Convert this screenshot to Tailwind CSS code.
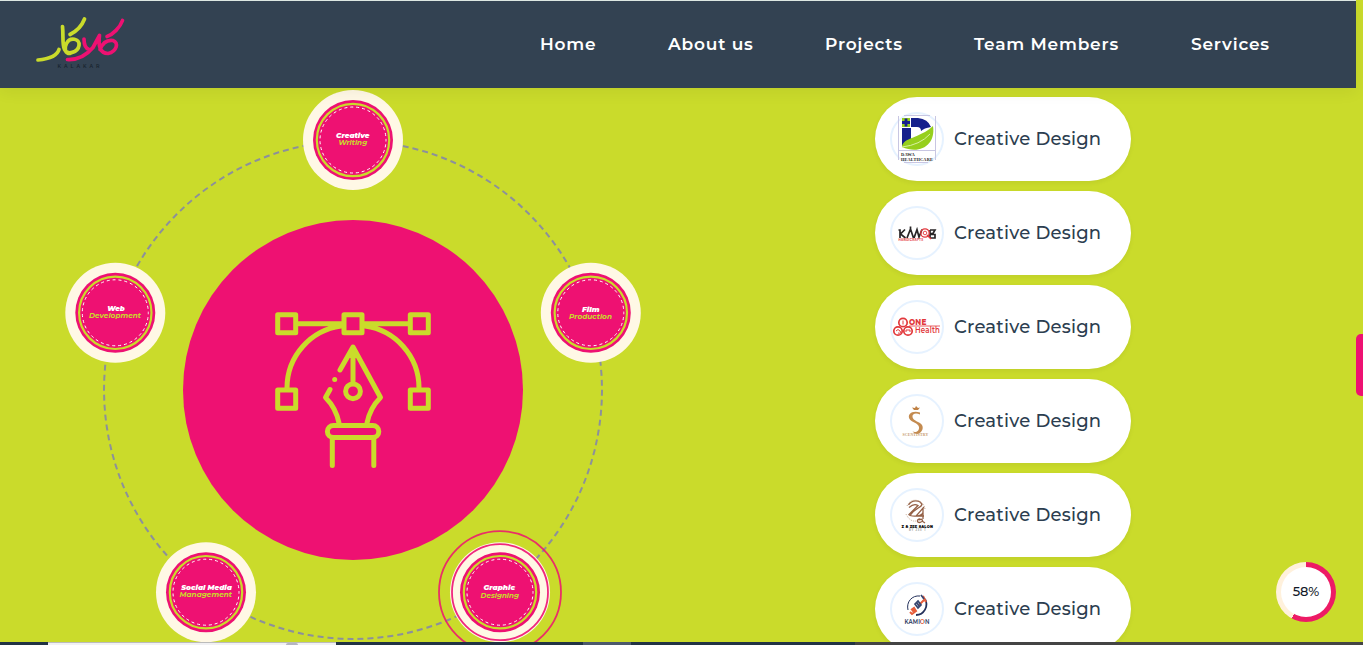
<!DOCTYPE html>
<html lang="en">
<head>
<meta charset="utf-8">
<title>Kalakar</title>
<script src="https://cdn.jsdelivr.net/npm/@tailwindcss/browser@4"></script>
</head>
<body class="h-[645px] w-[1363px] overflow-hidden bg-[#cadb2b] font-['Montserrat','Inter',sans-serif]">
<div class="relative flex h-[645px] flex-col overflow-hidden">
  <header class="relative z-10 flex h-[88px] w-[1356px] shrink-0 items-center border-t border-[#dde7e2] bg-[#334252] shadow-[0_4px_15px_rgba(0,0,0,0.06)]">
    <svg class="ml-[30px] h-[72px] w-[100px] shrink-0" viewBox="30 8.500 100 72" fill="none" stroke-linecap="round" stroke-linejoin="round" stroke-width="3.700">
      <path stroke="#cadb2b" d="M38 59.500C48 58.500 57 56 59 49M62.500 26C63.500 35 62 44 64.500 49C67 55 78 52 79 45C80 38 70 36 66.500 43C64 48 65 53 70 53"/>
      <path stroke="#cadb2b" d="M70 34C76 31 82 25 84.500 18.500"/>
      <path stroke="#ee1172" d="M67.500 59C80 59.500 88 53 93 47L99.500 35M84 38.500C84 45 86 48 89 49M99.500 35C98 45 100 53 108 53C117 51 119 42 113 40C106 39 102 44 100 49"/>
      <path stroke="#ee1172" d="M107 36C113 34 120 27 122.500 20"/>
      <text x="57.500" y="67.700" fill="#17232e" stroke="none" font-size="4.800" font-weight="600" textLength="42" font-family="Montserrat, Inter, sans-serif">KALAKAR</text>
    </svg>
    <nav class="-mt-[2px] ml-[410px] flex text-[17px] font-semibold leading-6 tracking-[0.8px] whitespace-nowrap text-white">
      <a class="w-[128px]">Home</a>
      <a class="w-[157px]">About us</a>
      <a class="w-[149px]">Projects</a>
      <a class="w-[217px]">Team Members</a>
      <a>Services</a>
    </nav>
  </header>

  <main class="flex flex-1">
    <section class="relative h-[557px] w-[875px] shrink-0">
      <div class="absolute top-[52px] left-[103px] size-[500px] rounded-full border-2 border-dashed border-[#8c909b]"></div>
      <div class="absolute top-[132px] left-[183px] flex size-[340px] items-center justify-center rounded-full bg-[#ee1172]">
        <svg class="size-[160px]" viewBox="273 310 160 160" fill="none" stroke="#cadb2b" stroke-width="5" stroke-linecap="round" stroke-linejoin="round">
          <path d="M298 323.700H342M364 323.700H408M287 388C287 356 311 330 341 326M365 326C395 330 419 356 419 388"/>
          <path d="M277.700 314.700H295.700V332.700H277.700ZM344 314.700H362V332.700H344ZM410.300 314.700H428.300V332.700H410.300ZM277.700 390H295.700V408.200H277.700ZM410.300 390H428.300V408.200H410.300Z"/>
          <circle cx="353" cy="391.300" r="7.400"/>
          <path d="M353 383V350M340 370L353 347L380.500 397.500C373 405 369 413 367 423M330 389.500L325.500 397.500C332 404 337 413 339 423"/>
          <path d="M353 347L348 358H358Z" fill="#cadb2b" stroke="none"/>
          <circle cx="334.700" cy="379.600" r="2.500" fill="#cadb2b" stroke="none"/>
          <rect x="327.400" y="425.600" width="51.400" height="12" rx="6"/>
          <path d="M332.300 439V465.500M373.800 439V465.500"/>
        </svg>
      </div>

      <svg class="absolute top-0 left-0 h-[557px] w-[875px]" viewBox="0 88 875 557" font-family="Montserrat, Inter, sans-serif" font-style="italic" font-size="7.700">
        <defs>
          <g id="badge">
            <circle r="50" fill="#fff8e5"/>
            <circle r="40" fill="#ee1172"/>
            <circle r="36.200" fill="none" stroke="#cadb2b" stroke-width="2.200"/>
            <circle r="33" fill="none" stroke="#fff" stroke-width="1" stroke-dasharray="3 2.924" stroke-dashoffset="1.500"/>
          </g>
        </defs>
        <use href="#badge" x="353" y="140"/>
        <use href="#badge" x="115.300" y="312.800"/>
        <use href="#badge" x="590.800" y="312.800"/>
        <use href="#badge" x="206" y="592.200"/>
        <use href="#badge" x="500" y="592.200"/>
        <circle cx="500" cy="592.200" r="48" fill="none" stroke="#ee1172" stroke-width="1.800" stroke-opacity=".9"/>
        <circle cx="500" cy="592.200" r="61" fill="none" stroke="#ee1172" stroke-width="1.800" stroke-opacity=".85"/>
        <g fill="#fff" font-weight="900">
          <text x="336" y="137.900" textLength="33.500" lengthAdjust="spacingAndGlyphs">Creative</text>
          <text x="107.300" y="310.800" textLength="17.500" lengthAdjust="spacingAndGlyphs">Web</text>
          <text x="582" y="311.800" textLength="17.500" lengthAdjust="spacingAndGlyphs">Film</text>
          <text x="181.300" y="590.400" textLength="50.500" lengthAdjust="spacingAndGlyphs">Social Media</text>
          <text x="483.500" y="590.100" textLength="31.500" lengthAdjust="spacingAndGlyphs">Graphic</text>
        </g>
        <g fill="#cadb2b" font-weight="700">
          <text x="338.500" y="144.900" textLength="28.700" lengthAdjust="spacingAndGlyphs">Writing</text>
          <text x="89" y="317.700" textLength="52" lengthAdjust="spacingAndGlyphs">Development</text>
          <text x="569" y="318.700" textLength="43" lengthAdjust="spacingAndGlyphs">Production</text>
          <text x="179.500" y="597.300" textLength="52.500" lengthAdjust="spacingAndGlyphs">Management</text>
          <text x="480.500" y="597.700" textLength="38.500" lengthAdjust="spacingAndGlyphs">Designing</text>
        </g>
      </svg>
    </section>

    <section class="flex h-[557px] w-[256px] flex-col gap-[10px] pt-[9px] text-[18px] font-medium tracking-[0.2px] whitespace-nowrap text-[#2c3e50]">
      <div class="flex h-[84px] shrink-0 items-center gap-[10px] rounded-[42px] bg-white pl-[15px] shadow-[0_2px_5px_rgba(0,0,0,0.06)]">
        <svg class="size-[54px] shrink-0" viewBox="0 0 54 54">
          <circle cx="27" cy="27" r="26" fill="#fff" stroke="#e6f2ff" stroke-width="2"/>
          <path d="M8.500 4V48M45.500 4V48M8 38.500H46M14 3.500H40M14 50.500H38" stroke="#c8c6e2" fill="none"/>
          <path fill="#16208c" d="M21 6H28Q38 7 41 15Q34 16 31 19Q31 15 27 15H21V28L12 34V16H21Z"/>
          <path fill="#96cf1d" d="M12 6H20V15H12ZM12 35C13 25 29 27 43 14C46 33 30 43 12 35Z"/>
          <path d="M16 6.500V14.500M12 10.500H20" stroke="#16208c" stroke-width="2.800"/>
          <path d="M12 35Q30 33 40 22" stroke="#d8f0a0" fill="none"/>
          <g fill="#222" font-family="Liberation Serif, serif" font-size="5" font-weight="700"><text x="11" y="43.500" textLength="14" lengthAdjust="spacingAndGlyphs">DAWA</text><text x="11" y="48.500" textLength="32" lengthAdjust="spacingAndGlyphs">HEALTHCARE</text></g>
        </svg>
        <span>Creative Design</span>
      </div>
      <div class="flex h-[84px] shrink-0 items-center gap-[10px] rounded-[42px] bg-white pl-[15px] shadow-[0_2px_5px_rgba(0,0,0,0.06)]">
        <svg class="size-[54px] shrink-0" viewBox="0 0 54 54">
          <circle cx="27" cy="27" r="26" fill="#fff" stroke="#e6f2ff" stroke-width="2"/>
          <path fill="none" stroke="#282526" stroke-width="1.700" d="M8.500 24H10V32M15 23.500L10.500 28L15.500 32M17 32L20.500 23L23.500 32M20.500 20.500V24M24 32L27 23.500L29 31L32 23.500M40 24H45L43 27.500H40V24M40 32V28.500H45V32H40"/>
          <g fill="none" stroke="#e4383d"><circle cx="35" cy="27" r="4.200" stroke-width="1.300"/><circle cx="35" cy="27" r="1.800" stroke-width=".900"/><path d="M37 29L41 33" stroke-width="1.500"/></g>
          <text x="8.500" y="34.500" fill="#e4383d" font-size="3" font-weight="700" textLength="25" font-family="Inter, sans-serif">HANDICRAFTS</text>
        </svg>
        <span>Creative Design</span>
      </div>
      <div class="flex h-[84px] shrink-0 items-center gap-[10px] rounded-[42px] bg-white pl-[15px] shadow-[0_2px_5px_rgba(0,0,0,0.06)]">
        <svg class="size-[54px] shrink-0" viewBox="0 0 54 54">
          <circle cx="27" cy="27" r="26" fill="#fff" stroke="#e6f2ff" stroke-width="2"/>
          <g fill="none" stroke="#e2383c" stroke-width="1.700"><circle cx="13" cy="22.500" r="4.200"/><circle cx="8" cy="31" r="4.200"/><circle cx="18" cy="31" r="4.200"/><path d="M13 20.500V24.500M6 31Q8 28 10 31T8 33M16 32V30H20V32" stroke-width="1"/><path d="M19 26H50" stroke-width=".800"/></g>
          <g fill="#e2383c" font-size="8.200" font-weight="800"><text x="19" y="24.800" textLength="17.500" lengthAdjust="spacingAndGlyphs">ONE</text><text x="25" y="33.200" font-weight="600" textLength="25" lengthAdjust="spacingAndGlyphs">Health</text></g>
        </svg>
        <span>Creative Design</span>
      </div>
      <div class="flex h-[84px] shrink-0 items-center gap-[10px] rounded-[42px] bg-white pl-[15px] shadow-[0_2px_5px_rgba(0,0,0,0.06)]">
        <svg class="size-[54px] shrink-0" viewBox="0 0 54 54">
          <circle cx="27" cy="27" r="26" fill="#fff" stroke="#e6f2ff" stroke-width="2"/>
          <path fill="#bf8043" d="M22 13.500L25 14L26 12L28 14L30 13.500L28 16H24Z"/>
          <path fill="#c48b50" d="M30 18.500C22 16 17 20.500 19.500 25C22 29 28 28.500 29 33C29.500 37 26 39 22.500 37.500C28 44 35 36 32 31C29.500 27.500 23 27 22.500 23C22 19.500 26 18.500 30 20.500Z"/>
          <text x="12.500" y="42.200" fill="#c79a6b" font-size="4.200" font-weight="700" textLength="26" lengthAdjust="spacingAndGlyphs" font-family="Liberation Serif, serif">SCENTISTRY</text>
        </svg>
        <span>Creative Design</span>
      </div>
      <div class="flex h-[84px] shrink-0 items-center gap-[10px] rounded-[42px] bg-white pl-[15px] shadow-[0_2px_5px_rgba(0,0,0,0.06)]">
        <svg class="size-[54px] shrink-0" viewBox="0 0 54 54">
          <circle cx="27" cy="27" r="26" fill="#fff" stroke="#e6f2ff" stroke-width="2"/>
          <path fill="none" stroke="#946046" stroke-width="1.300" d="M18.500 17C22 11 30 12 32 16.500C31 20 25 20 20 27.500C25 29 32 28 33 24.500M19 19.500Q24 15 28 17.500L18.500 27M34 19L26 28H34M33 20V31M30 31C26 31 27 36 31 34C34 33 32 30 29 32M32 33L35 35"/>
          <path fill="none" stroke="#c0a18b" stroke-width=".900" stroke-dasharray="1 1" d="M17 18C21 8 35 12 35 22M16 26Q20 34 26 33"/>
          <text x="11.500" y="39.500" fill="#111" font-size="4.200" font-weight="900" textLength="31.500" lengthAdjust="spacingAndGlyphs">Z &amp; ZEE SALON</text>
          <text x="19" y="43" fill="#777" font-size="2.800" textLength="17" font-family="Inter, sans-serif">BY ZEE T</text>
        </svg>
        <span>Creative Design</span>
      </div>
      <div class="flex h-[84px] shrink-0 items-center gap-[10px] rounded-[42px] bg-white pl-[15px] shadow-[0_2px_5px_rgba(0,0,0,0.06)]">
        <svg class="size-[54px] shrink-0" viewBox="0 0 54 54">
          <defs><linearGradient id="kamion"><stop offset=".66" stop-color="#2b345a"/><stop offset=".66" stop-color="#e65d3b"/><stop offset=".78" stop-color="#e65d3b"/><stop offset=".78" stop-color="#2b345a"/></linearGradient></defs>
          <circle cx="27" cy="27" r="26" fill="#fff" stroke="#e6f2ff" stroke-width="2"/>
          <path fill="none" stroke="#24315b" stroke-width="1" d="M18 28C16 20 22 13 30 14"/>
          <path fill="none" stroke="#24315b" stroke-width="1.800" d="M35 17C39 24 34 33 26 33"/>
          <path fill="none" stroke="#e65d3b" stroke-width="2" d="M21 28L24 26L26 29L22 32L20 30M22 29L25 28M29 23L34 18M33 14L36 20"/>
          <path fill="none" stroke="#36456f" stroke-width="1.700" d="M25 22L28 19L31 23L28 26ZM27 21L29 24M31 13L34 17"/>
          <text x="14.500" y="41.500" fill="url(#kamion)" font-size="6.600" font-weight="600" textLength="25" lengthAdjust="spacingAndGlyphs">KAMION</text>
        </svg>
        <span>Creative Design</span>
      </div>
    </section>
  </main>

  <div class="absolute top-[334px] right-0 h-[62px] w-[7px] rounded-l-[5px] bg-[#ee1172]"></div>

  <div class="absolute top-[562px] left-[1276px] flex size-[60px] items-center justify-center rounded-full bg-[conic-gradient(#ed1b65_0_58%,#fff1dc_58%_100%)]">
    <div class="flex size-[50px] items-center justify-center rounded-full bg-white text-[13px] font-medium text-[#111827]">58%</div>
  </div>

  <div class="absolute bottom-0 left-0 z-10 flex h-[3px] w-full bg-[#444]">
    <div class="w-[48px] bg-[#223344]"></div>
    <div class="relative w-[288px] overflow-hidden border-t border-[#bbb] bg-[#f1f1f3]"><span class="absolute top-0 left-[238px] h-[4px] w-[12px] rounded-full bg-[#b5b5c0]"></span></div>
    <div class="w-[247px] bg-[#223344]"></div>
    <div class="w-[48px] bg-[#4c596b]"></div>
    <div class="w-[224px] bg-[#223344]"></div>
  </div>
</div>
</body>
</html>
